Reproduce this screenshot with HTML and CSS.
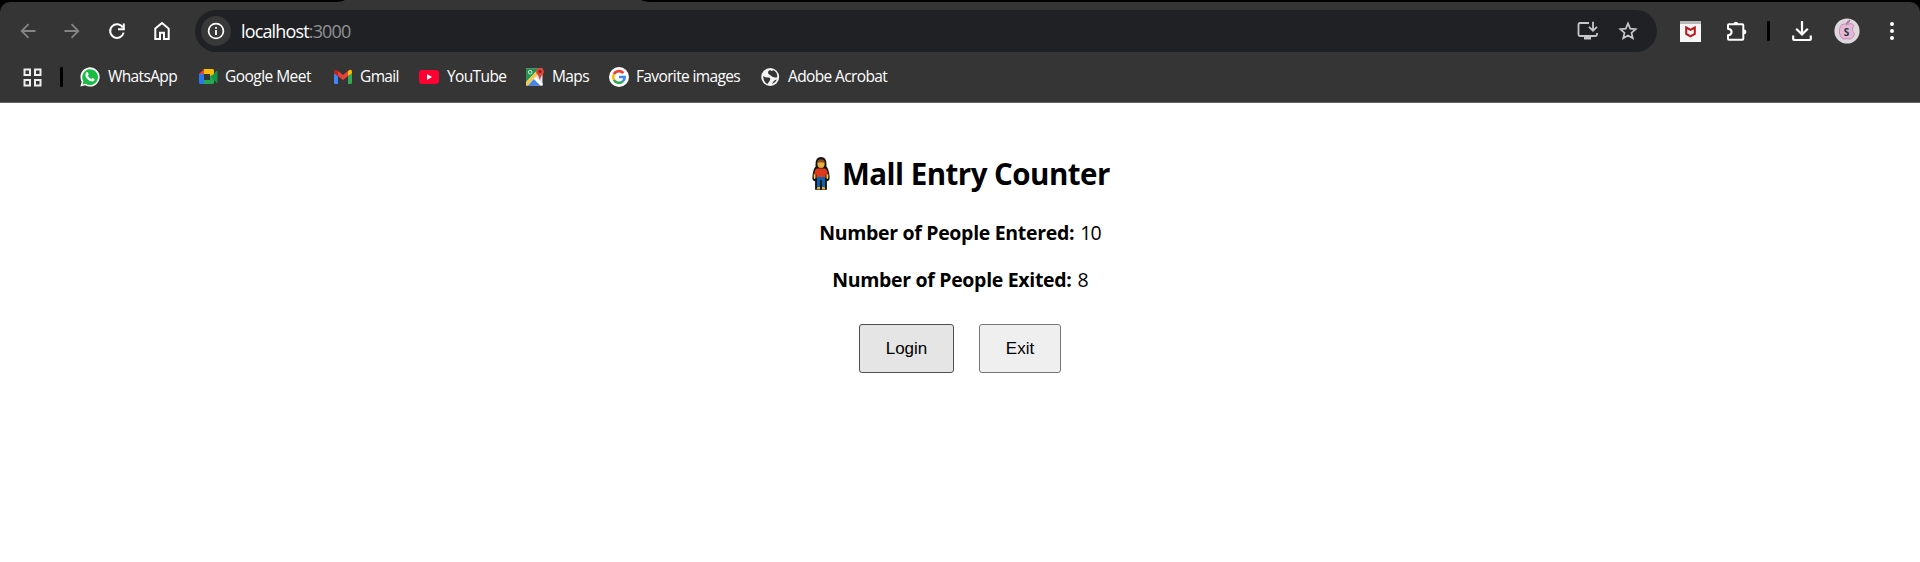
FILE: index.html
```html
<!DOCTYPE html>
<html lang="en">
<head>
<meta charset="utf-8">
<title>Mall Entry Counter</title>
<link rel="stylesheet" href="styles.css">
</head>
<body>
<header class="browser">
  <div class="tabstrip"><svg width="320" height="2" viewBox="0 0 320 2"><path d="M0 2Q8 2 12 0H308Q312 2 320 2Z" fill="#353535"/></svg></div>
  <div class="chrome">
    <div class="toolbar">
      <svg class="back" width="16" height="18" viewBox="0 0 16 18" fill="none" stroke="#858585" stroke-width="1.8"><path d="M15.5 9H2M8.5 2.2L1.7 9l6.8 6.8"/></svg>
      <svg class="forward" width="16" height="18" viewBox="0 0 16 18" fill="none" stroke="#858585" stroke-width="1.8"><path d="M.5 9H14M7.5 2.2L14.3 9l-6.8 6.8"/></svg>
      <svg class="reload" width="18" height="18" viewBox="0 0 18 18" fill="none" stroke="#fff" stroke-width="2"><path d="M14.8 5.6A6.8 6.8 0 1 0 15.6 10.6"/><path d="M15.8 1.4V7.2H10"/></svg>
      <svg class="home" width="16" height="20" viewBox="0 0 16 20" fill="none" stroke="#fff" stroke-width="2"><path d="M1.3 7.6L8 2l6.7 5.6V18H10v-6.3H6V18H1.3Z"/></svg>
      <div class="omnibox">
        <span class="info"><svg width="18" height="18" viewBox="0 0 18 18"><circle cx="9" cy="9" r="7.4" fill="none" stroke="#fff" stroke-width="1.7"/><path d="M9 8v5M9 5v1.8" stroke="#fff" stroke-width="1.8"/></svg></span>
        <span class="url">localhost<i>:3000</i></span>
        <svg class="install" width="22" height="20" viewBox="0 0 22 20" fill="none" stroke="#c7c7c7" stroke-width="1.8"><path d="M12 2H3Q1.5 2 1.5 3.5V13.500Q1.500 15 3 15H18.500Q20 15 20 13.500V12"/><path d="M7 17H14" stroke-width="3"/><path d="M16 .8V9M12 5.800L16 9.800L20 5.800"/></svg>
        <svg class="star" width="20" height="20" viewBox="0 0 20 20" fill="none" stroke="#c7c7c7" stroke-width="1.700"><path d="M10 2.400L12.200 7.600L17.700 8.100L13.500 11.800L14.800 17.300L10 14.400L5.200 17.300L6.500 11.800L2.300 8.100L7.800 7.600Z"/></svg>
      </div>
      <svg class="mcafee" width="21" height="21" viewBox="0 0 21 21"><path d="M0 0H21V21H0Z" fill="#f6f6f6"/><path d="M0 0H21V3H0Z" fill="#b9b9b9"/><path d="M6.200 6.500L10.500 8.800L14.800 6.500V13L10.500 15.300L6.200 13Z" fill="none" stroke="#b9151b" stroke-width="2"/></svg>
      <svg class="puzzle" width="22" height="22" viewBox="0 0 22 22"><path d="M2 5.200Q2 4.200 3 4.200H16.300Q17.300 4.200 17.300 5.200V18.800Q17.300 19.800 16.300 19.800H3Q2 19.800 2 18.800V15.300Q5.600 15 5.600 12Q5.600 9 2 8.700Z" fill="none" stroke="#fff" stroke-width="2"/><path d="M7.500 4A2.300 2.300 0 0 1 12.100 4ZM18 9.500A2.400 2.400 0 0 1 18 14.300Z" fill="#fff"/></svg>
      <span class="divider"></span>
      <svg class="download" width="20" height="22" viewBox="0 0 20 22" fill="none" stroke="#fff" stroke-width="2.200"><path d="M10 1V14M4.200 8.700L10 14.500L15.800 8.700M1.200 15.500V18.500Q1.200 20 2.700 20H17.300Q18.800 20 18.800 18.500V15.500"/></svg>
      <svg class="avatar" width="26" height="26" viewBox="0 0 26 26"><circle cx="13" cy="13" r="12.600" fill="#dcd8dc"/><path d="M13 7Q17 4 20 7.500Q16.500 11 20.500 16Q18 23 13 20.500Q7 23 5.500 15Q5 6 10 6Q12 6 13 7Z" fill="#e3b9d6" stroke="#c07aad" stroke-width=".8"/><path d="M12 6Q13 3 16 2Q16 5 12 6Z" fill="#d58bbb" stroke="#9e6289" stroke-width=".7"/><text x="12.500" y="17.500" text-anchor="middle" class="initial">S</text></svg>
      <svg class="more" width="6" height="20" viewBox="0 0 6 20" fill="#fff"><circle cx="3" cy="3" r="2"/><circle cx="3" cy="10" r="2"/><circle cx="3" cy="17" r="2"/></svg>
    </div>
    <nav class="bookmarks">
      <svg class="apps" width="19" height="19" viewBox="0 0 19 19" fill="none" stroke="#eee" stroke-width="2"><path d="M1.500 1.500H7V7H1.500ZM12 1.500H17.500V7H12ZM1.500 12H7V17.500H1.500ZM12 12H17.500V17.500H12Z"/></svg>
      <span class="divider"></span>
      <a class="bookmark whatsapp"><svg width="20" height="20" viewBox="0 0 20 20"><path d="M.4 19.600L1.700 14.700A9.600 9.600 0 1 1 5.300 18.300Z" fill="#fff"/><path d="M2.500 17.500L3.400 14.300A7.900 7.900 0 1 1 5.700 16.700Z" fill="#19bd45"/><path d="M6.200 5.500Q7.400 4.500 8 5.800L8.700 7.400L7.800 8.800Q9 11 11.300 12L12.500 10.900L14.600 12Q14.800 14.200 12.500 14.600Q9.500 14.600 7 11.700Q4.200 8.200 6.200 5.500Z" fill="#fff"/></svg><span>WhatsApp</span></a>
      <a class="bookmark meet"><svg width="20" height="20" viewBox="0 0 20 20"><path d="M0 7L5 2V7Z" fill="#ea4335"/><path d="M5 2H13.500Q15 2 15 3.500V9L11 10V7H5Z" fill="#fbbc04"/><path d="M0 7H5V17H1.500Q0 17 0 15.500Z" fill="#2878ed"/><path d="M5 13H11V9L15 7V15.500Q15 17 13.500 17H5Z" fill="#24a852"/><path d="M12 10L17.500 4Q18.500 3.300 18.500 4.600V15.200Q18.500 16.500 17.500 15.700Z" fill="#149447"/></svg><span>Google Meet</span></a>
      <a class="bookmark gmail"><svg width="20" height="20" viewBox="0 0 20 20"><path d="M0 6L4 9V17H1.200Q0 17 0 15.800Z" fill="#4285f4"/><path d="M14 9L18 6V15.800Q18 17 16.800 17H14Z" fill="#34a853"/><path d="M4 4L9 8L14 4V9L9 13L4 9Z" fill="#ea4335"/><path d="M0 5Q0 2 3 3.200L4 4V9L0 6.200Z" fill="#c5221f"/><path d="M18 5Q18 2 15 3.200L14 4V9L18 6.200Z" fill="#fbbc04"/></svg><span>Gmail</span></a>
      <a class="bookmark youtube"><svg width="20" height="20" viewBox="0 0 20 20"><rect y="3" width="20" height="14" rx="3.200" fill="#ff0033"/><path d="M8 7L13 10L8 13Z" fill="#fff"/></svg><span>YouTube</span></a>
      <a class="bookmark maps"><svg width="20" height="20" viewBox="0 0 20 20"><rect y="1.500" width="16.500" height="17" fill="#dce0e2"/><path d="M0 1.500H13L0 15Z" fill="#239451"/><path d="M0 15L13 1.500L15 4L1.500 18.500H0Z" fill="#f5cb4d"/><path d="M2 18.500L8 12L14.500 18.500Z" fill="#4487ed"/><path d="M8 12L10 10L16.500 16.500V18.500H14.500Z" fill="#fff"/><circle cx="4.200" cy="5.200" r="1.800" fill="none" stroke="#d9eee0"/><path d="M13.800 13Q13.300 9 10.500 6.500A3.900 3.900 0 1 1 17.400 6.500Q14.500 9 13.800 13Z" fill="#de4438"/><circle cx="13.900" cy="4.500" r="1.500" fill="#861e18"/></svg><span>Maps</span></a>
      <a class="bookmark images"><svg width="20" height="20" viewBox="0 0 20 20" fill="none" stroke-width="2.600"><circle cx="10" cy="10" r="10" fill="#fff"/><path d="M14.400 6.100A5.800 5.800 0 0 0 4.900 7.200" stroke="#ea4335"/><path d="M4.900 7.200A6 6 0 0 0 4.900 12.800" stroke="#fbbc04"/><path d="M4.900 12.800A5.800 5.800 0 0 0 13.700 14.500" stroke="#34a853"/><path d="M13.700 14.500Q15.700 12.800 15.700 10H10" stroke="#4285f4"/></svg><span>Favorite images</span></a>
      <a class="bookmark acrobat"><svg width="20" height="20" viewBox="0 0 20 20"><circle cx="9.200" cy="10" r="9" fill="#f4f4f4"/><path d="M2.200 9Q5 11 8 10.500Q10 11 8.800 13.500L6.500 17Q2.500 15.500 2.200 9ZM9 3Q6 4.500 7.500 7Q9 7.800 10 8.800Q12 11 16.200 10.300Q16.700 5 12 3Q11.500 5 9 3ZM11 17Q12.500 13 15.800 12.500Q14.600 16 11 17Z" fill="#353535"/></svg><span>Adobe Acrobat</span></a>
    </nav>
  </div>
</header>
<main class="page">
  <h2 class="title"><svg width="20" height="36" viewBox="0 0 22 36" preserveAspectRatio="none" stroke-linejoin="round"><path d="M11 2Q6 2 6 8V11Q3 13 2.500 22Q3 25 5.500 24V33H16.500V24Q19 25 19.500 22Q19 13 16 11V8Q16 2 11 2Z" fill="#111" stroke="#111" stroke-width="2"/><circle cx="11" cy="8" r="4" fill="#e9ad3a"/><path d="M6.700 7Q7 3.200 11 3.200T15.300 7Q11 5.500 6.700 7Z" fill="#8b4e20"/><path d="M3 18V22Q4 24 5 22V18M17 18V22Q18 24 19 22V18" fill="#ffc83d"/><path d="M6.500 12.500H15.500Q18 13.500 18.500 18.500H16V22H6V18.500H3.500Q4 13.500 6.500 12.500Z" fill="#e03a1c"/><path d="M6.500 21H15.500V31H12V24H10V31H6.500Z" fill="#0b62ae"/><path d="M7 31H10V33.500H6ZM12 31H15L16 33.500H12Z" fill="#e9ad3a"/></svg><span>Mall Entry Counter</span></h2>
  <p class="count entered"><b>Number of People Entered:</b><span>10</span></p>
  <p class="count exited"><b>Number of People Exited:</b><span>8</span></p>
  <div class="actions"><button class="login">Login</button><button class="exit">Exit</button></div>
</main>
</body>
</html>
```
FILE: styles.css
```css
* { box-sizing: border-box; }
body { margin: 0; height: 562px; overflow: hidden; background: #fff; color: #000; font-family: "Open Sans", "Noto Sans", sans-serif; }
svg { display: block; flex: none; }
.browser { height: 103px; background: #000; }
.tabstrip { height: 2px; padding-left: 330px; }
.tabstrip svg { width: 326px; }
.chrome { height: 101px; background: #353535; border-radius: 10px 10px 0 0; border-bottom: 1px solid #646464; }
.toolbar { display: flex; align-items: center; height: 58px; padding-left: 20px; }
.forward { margin-left: 28px; }
.reload { margin-left: 28px; }
.home { margin-left: 28px; }
.omnibox { display: flex; align-items: center; width: 1462px; height: 42px; margin-left: 25px; padding-left: 6px; border-radius: 21px; background: #202124; }
.info { display: grid; place-items: center; width: 30px; height: 30px; border-radius: 50%; background: #383838; }
.url { width: 112px; margin-left: 10px; font-size: 18px; line-height: 24px; letter-spacing: -.85px; color: #fff; white-space: nowrap; }
.url i { font-style: normal; color: #909193; }
.install { margin-left: 1224px; }
.star { margin-left: 19px; }
.mcafee { margin-left: 23px; }
.puzzle { margin-left: 25px; }
.divider { flex: none; width: 3px; height: 20px; border-radius: 1px; background: #000; }
.toolbar .divider { margin-left: 19px; }
.download { margin-left: 22px; }
.avatar { margin-left: 22px; }
.initial { font: bold 10px "Open Sans", sans-serif; fill: #263744; }
.more { margin-left: 29px; }
.bookmarks { display: flex; align-items: center; height: 34px; padding-left: 23px; }
.bookmarks .divider { margin: 0 17px 0 18px; }
.bookmark { display: flex; align-items: center; flex: none; color: #fff; font-size: 15.5px; line-height: 20px; letter-spacing: -.63px; white-space: nowrap; }
.bookmark svg { margin-right: 8px; }
.bookmark span { margin-bottom: 2px; }
.whatsapp { width: 119px; }
.meet { width: 135px; }
.meet span { letter-spacing: -.54px; }
.meet svg { margin-right: 6px; }
.gmail { width: 85px; }
.gmail svg { margin-right: 6px; }
.youtube { width: 107px; }
.maps { width: 83px; }
.maps svg { margin-right: 6px; }
.images { width: 152px; }
.images svg { margin-right: 7px; }
.acrobat svg { margin-right: 7px; }
.page { display: flex; flex-direction: column; align-items: center; padding-top: 52px; }
.title { display: flex; align-items: center; height: 38px; margin: 0; font-size: 29.5px; line-height: 38px; }
.title span { width: 267px; margin-left: 11px; white-space: nowrap; letter-spacing: -.53px; }
.count { display: flex; height: 28px; margin: 26px 0 0; font-size: 19.5px; line-height: 28px; white-space: nowrap; }
.count b { letter-spacing: -.32px; }
.count span { margin-left: 6px; letter-spacing: -.8px; }
.exited { margin-top: 19px; }
.actions { display: flex; gap: 25px; margin-top: 30px; }
.actions button { height: 49px; padding: 0; border: 1px solid #767676; border-radius: 3px; background: #efefef; color: #000; font: 17px "Liberation Sans", Arial, sans-serif; }
.actions .login { width: 95px; border-color: #4f4f4f; background: #e5e5e5; }
.actions .exit { width: 82px; }
```
